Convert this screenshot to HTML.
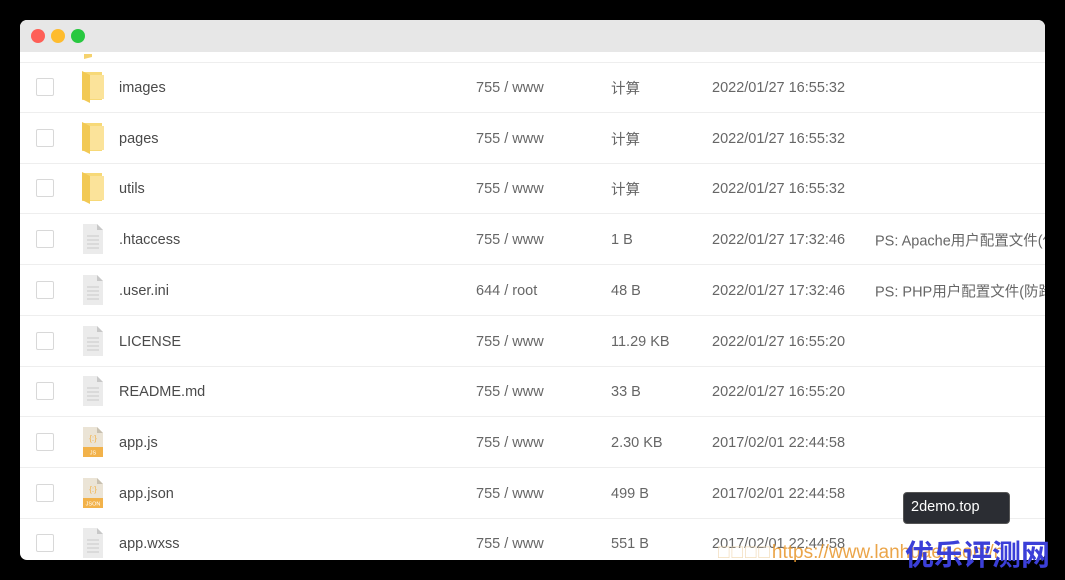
<!DOCTYPE html>
<html><head><meta charset="utf-8"><style>
*{margin:0;padding:0;box-sizing:border-box}
body{width:1065px;height:580px;background:#000;position:relative;overflow:hidden;font-family:"Liberation Sans","Noto Sans CJK SC",sans-serif}
.win{position:absolute;left:20px;top:20px;width:1025px;height:540px;background:#fff;border-radius:7px;overflow:hidden}
.tb{height:32px;background:#e7e7e7;position:relative}
.dot{position:absolute;top:9px;width:14px;height:14px;border-radius:50%}
.row{position:absolute;left:0;right:0;height:51px;border-bottom:1px solid #eeeeee;font-size:14.5px;color:#555}
.row span{position:absolute;top:50%;transform:translateY(-45%);white-space:nowrap}
.cb{position:absolute;left:16px;top:50%;margin-top:-9px;width:18px;height:18px;border:1px solid #d8d8d8;border-radius:2px;background:#fff}
.g{color:#20a53a}
.ic{position:absolute;left:62px;top:50%;transform:translateY(-50%)}
</style></head><body>
<div class="win">
<div class="tb"><div class="dot" style="left:11px;background:#fe5f57"></div><div class="dot" style="left:31px;background:#febc2e"></div><div class="dot" style="left:51px;background:#28c840"></div></div>
<div style="position:absolute;left:62px;top:32px;width:22px;height:11px"><svg width="22" height="11"><path d="M2 0h8v3l-8 2z" fill="#f5d26e"/></svg></div>
<div style="position:absolute;left:0;right:0;top:42px;border-top:1px solid #eee"></div>
</div>
<div style="position:absolute;left:718px;top:542px;font-size:19px;color:#e8962a;opacity:.85;white-space:nowrap"><span style="color:#f0d8b0;letter-spacing:2px">□□□□</span>https://www.lanhuaer.com/n</div>
<div style="position:absolute;left:905px;top:536px;font-size:29px;font-weight:bold;color:#3b3fd8;font-family:'Noto Sans CJK SC',sans-serif;line-height:34px">优乐评测网</div>
<div style="position:absolute;left:903px;top:492px;width:107px;height:32px;background:#2b2d33;border:1px solid #555;border-radius:4px;color:#fff;font-size:14.5px;padding:6px 0 0 7px">2demo.top</div>
<script>
var rows=[
["f","images","755 / www","计算","2022/01/27 16:55:32",""],
["f","pages","755 / www","计算","2022/01/27 16:55:32",""],
["f","utils","755 / www","计算","2022/01/27 16:55:32",""],
["d",".htaccess","755 / www","1 B","2022/01/27 17:32:46","PS: Apache用户配置文件(伪静态)"],
["d",".user.ini","644 / root","48 B","2022/01/27 17:32:46","PS: PHP用户配置文件(防跨站)"],
["d","LICENSE","755 / www","11.29 KB","2022/01/27 16:55:20",""],
["d","README.md","755 / www","33 B","2022/01/27 16:55:20",""],
["j","app.js","755 / www","2.30 KB","2017/02/01 22:44:58",""],
["n","app.json","755 / www","499 B","2017/02/01 22:44:58",""],
["d","app.wxss","755 / www","551 B","2017/02/01 22:44:58",""]];
var h="";
rows.forEach(function(r,i){
var top=42+i*50.7;var ic;
if(r[0]=="f")ic='<svg class="ic" width="22" height="34"><path d="M0 2h20v28H0z" fill="#f7d978"/><path d="M8 5h14v24H8z" fill="#fbe39a"/><path d="M0 1l8 4v28l-8-4z" fill="#f2c954"/></svg>';
else if(r[0]=="d")ic='<svg class="ic" width="22" height="30"><path d="M1 0h14l6 6v24H1z" fill="#ebebeb"/><path d="M15 0v6h6z" fill="#c8c8c8"/><path d="M5 12h12M5 16h12M5 20h12M5 24h12" stroke="#d0d0d0" stroke-width="1.3"/></svg>';
else ic='<svg class="ic" width="22" height="30"><path d="M1 0h14l6 6v24H1z" fill="#ebe4d6"/><path d="M15 0v6h6z" fill="#c8c0b0"/><rect x="1" y="20" width="20" height="10" fill="#f2b24a"/><text x="11" y="14" font-size="8" fill="#f2b24a" text-anchor="middle" font-family="Liberation Sans">{:}</text><text x="11" y="27.5" font-size="5.5" fill="#fff" text-anchor="middle" font-family="Liberation Sans">'+(r[0]=="j"?"JS":"JSON")+'</text></svg>';
h+='<div class="row" style="top:'+top+'px"><div class="cb"></div>'+ic+'<span style="left:99px;color:#4a4a4a">'+r[1]+'</span><span style="left:456px;color:#666">'+r[2]+'</span><span style="left:591px;color:#666" class="'+(r[3]=="计算"?"g":"")+'">'+r[3]+'</span><span style="left:692px;color:#666">'+r[4]+'</span><span style="left:855px;color:#666">'+r[5]+'</span></div>';
});
document.querySelector('.win').insertAdjacentHTML('beforeend',h);
</script>
</body></html>
